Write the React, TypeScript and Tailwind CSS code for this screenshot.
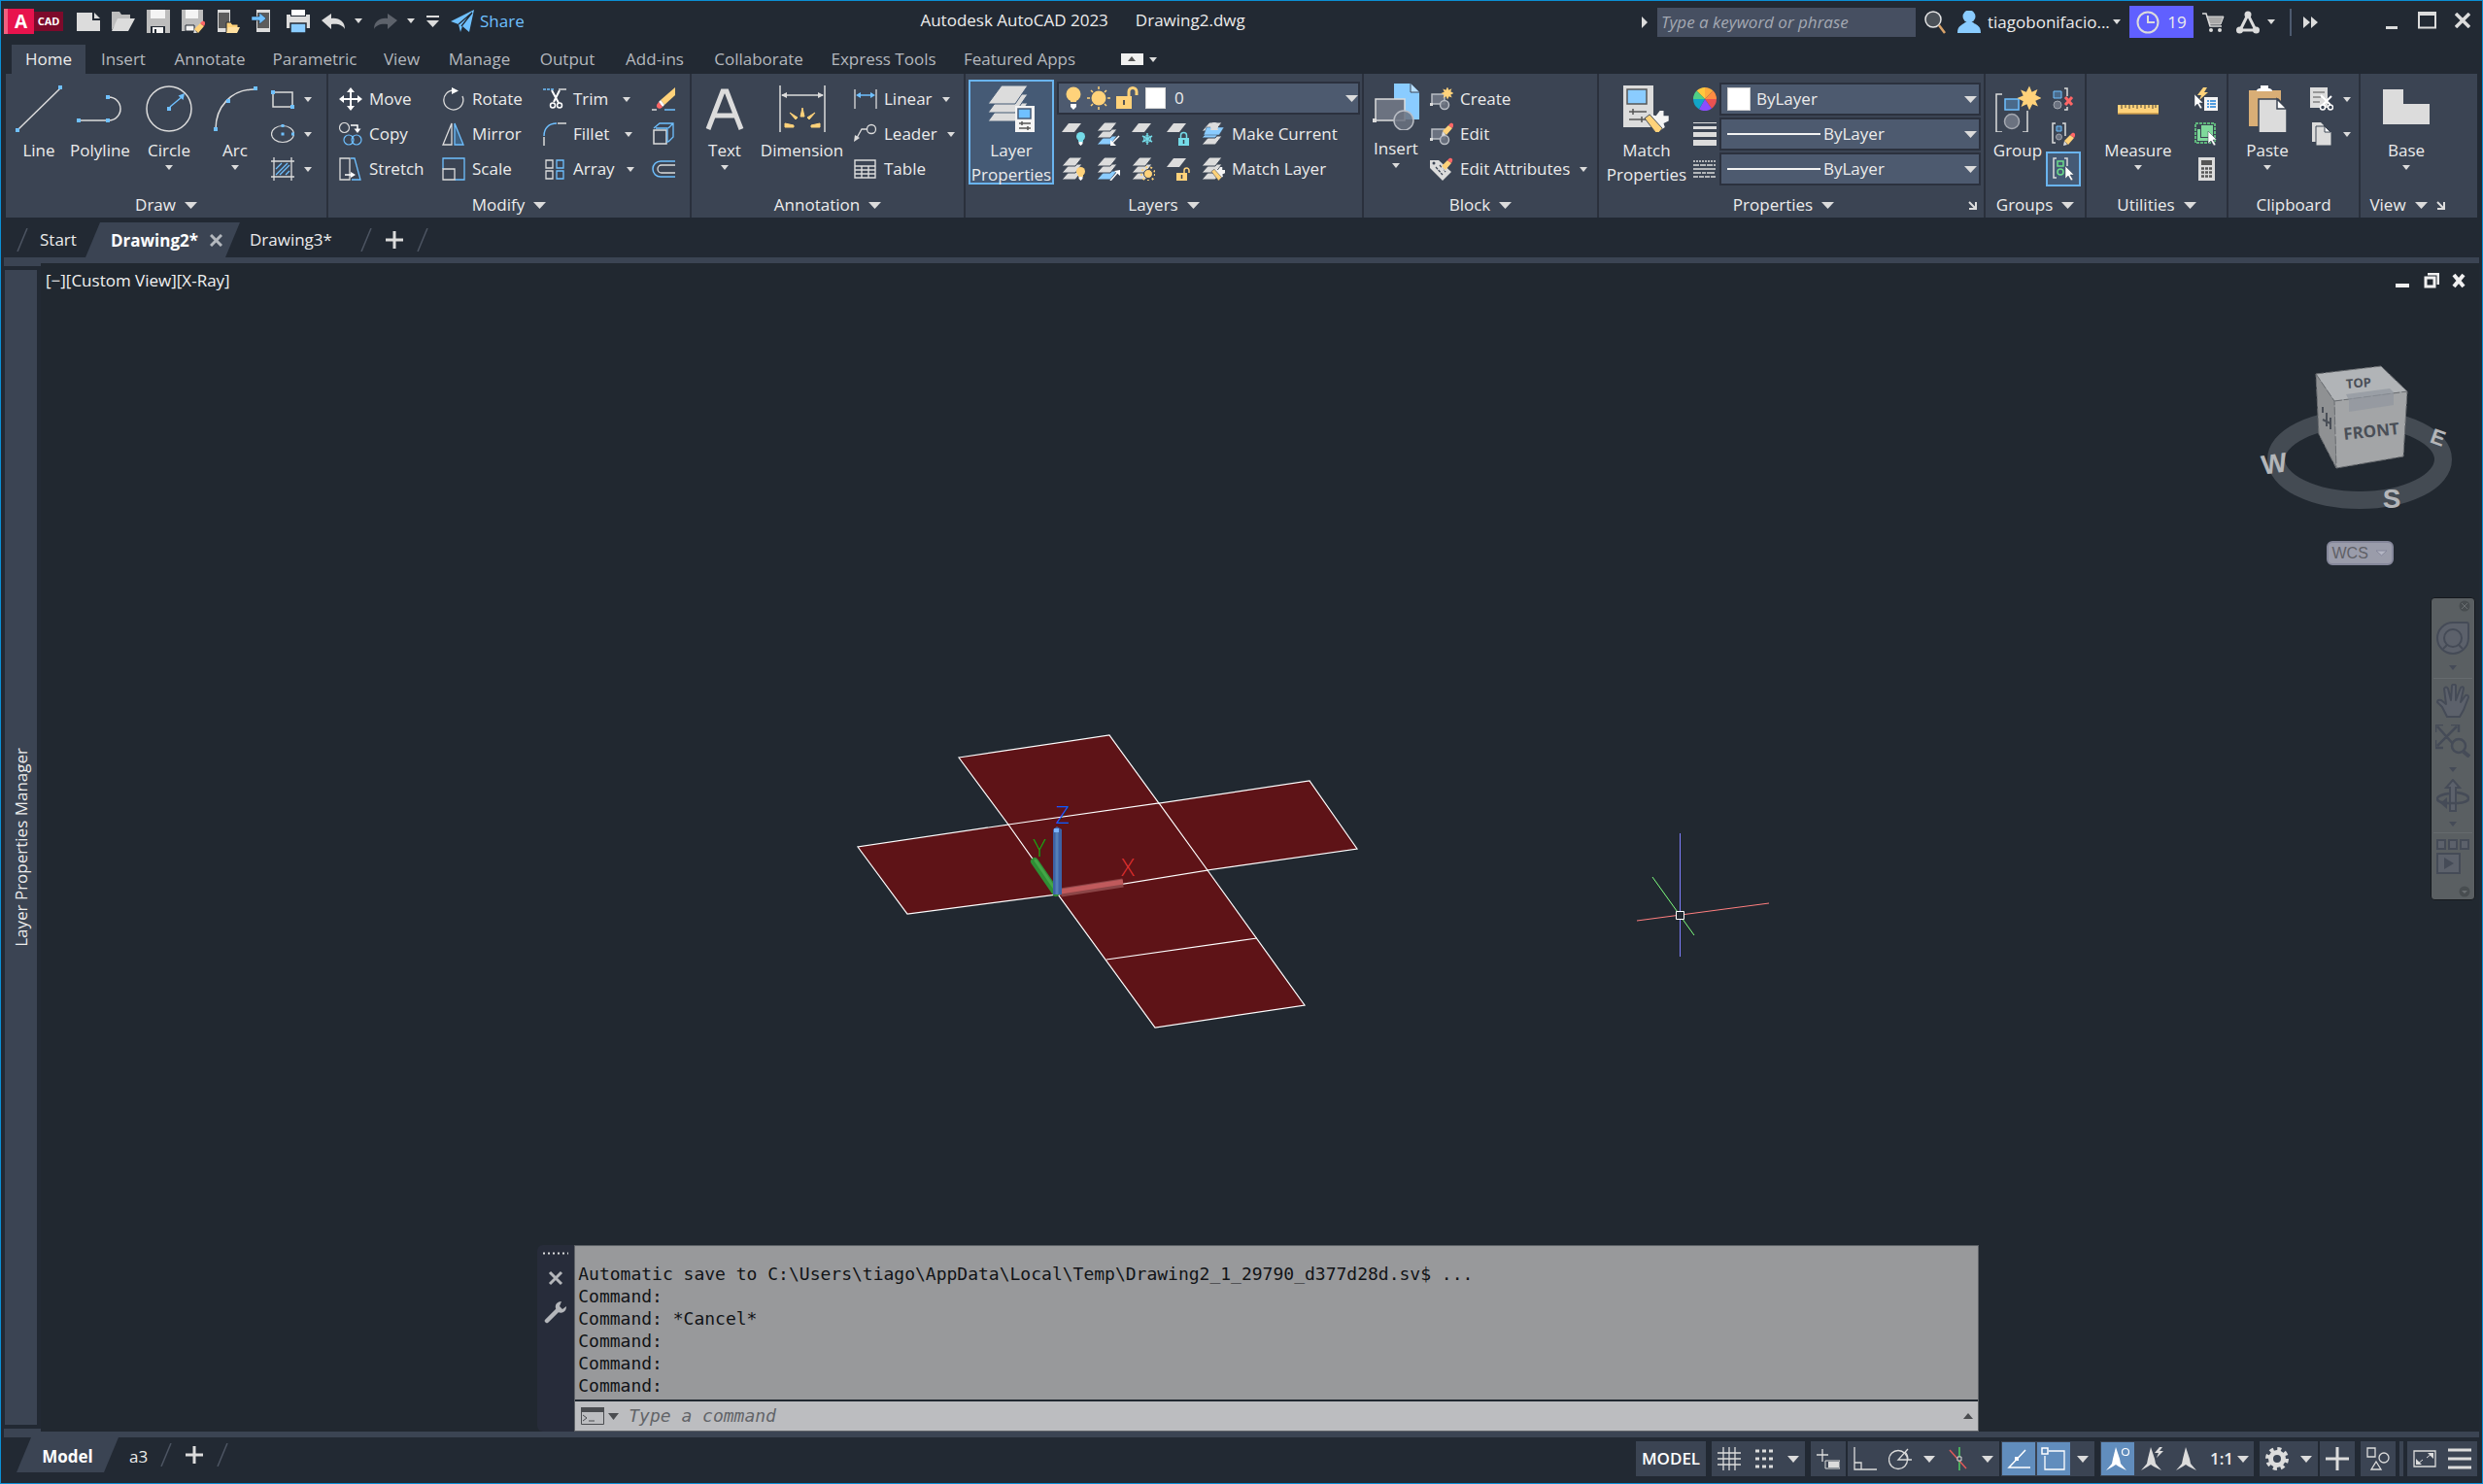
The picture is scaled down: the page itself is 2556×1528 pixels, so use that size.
import type { ReactNode } from 'react';

const W = '#dcdcdc';
const B = '#6fc0ff';
const LB = '#8accff';
const Y = '#ffd27a';
const P = '#3b4453';
const CY = '#74dbe8';
const G = '#6cdc8b';
const R = '#ff6666';

function Ic({ w = 24, h = 24, children }: { w?: number; h?: number; children: ReactNode }) {
  return (
    <svg width={w} height={h} viewBox={`0 0 ${w} ${h}`} fill="none" className="shrink-0" aria-hidden="true">
      {children}
    </svg>
  );
}

function Caret({ big }: { big?: boolean }) {
  return big ? (
    <Ic w={13} h={7}><path d="M0 0h13L6.500 7z" fill={W} /></Ic>
  ) : (
    <Ic w={8} h={5}><path d="M0 0h8L4 5z" fill={W} /></Ic>
  );
}

function Launcher() {
  return (
    <button aria-label="Open dialog" className="flex">
      <Ic w={9} h={9}><path d="M1 1l6 6M8 1v7H1" stroke={W} strokeWidth="2" /></Ic>
    </button>
  );
}

// ---------- shared icon parts ----------

const Sheets = ({ mid = W, low = W }: { mid?: string; low?: string }) => (
  <g stroke={P} strokeWidth="1">
    <path d="M8 14h13l-7 9H0z" fill={low} />
    <path d="M8 7h13l-7 9H0z" fill={mid} />
    <path d="M8 0h13l-7 9H0z" fill={W} />
  </g>
);

const Sheet = () => <path d="M7 1h13l-7 9H0z" fill={W} />;

const Bulb = ({ x, y, c }: { x: number; y: number; c: string }) => (
  <g transform={`translate(${x} ${y})`}>
    <circle cx="4.500" cy="4.500" r="4.500" fill={c} />
    <path d="M2 7h5v3H2z" fill={c} />
    <path d="M2.500 10h4v2l-2 2-2-2z" fill="#fff" />
  </g>
);

const Padlock = ({ x, y, c, open }: { x: number; y: number; c: string; open?: boolean }) => (
  <g transform={`translate(${x} ${y})`}>
    <path d={open ? 'M8 6V3.500a2.500 2.500 0 015 0V6' : 'M2.500 6V3.500a3 3 0 016 0V6'} stroke={c} strokeWidth="1.500" />
    <path d="M0 6h11v8H0z" fill={c} />
    <path d="M5.500 8v4" stroke={P} strokeWidth="1.500" />
  </g>
);

const Pencil = ({ x, y }: { x: number; y: number }) => (
  <g transform={`translate(${x} ${y})`}>
    <path d="M0 14l1-5 3 4z" fill={W} />
    <path d="M1 9l6-6 4 3-6 7z" fill={Y} />
    <path d="M7 3l2-2c2-1 4 1 3 3l-1 2z" fill={R} />
  </g>
);

const Cursor = ({ x, y }: { x: number; y: number }) => (
  <path transform={`translate(${x} ${y})`} d="M0 0v13l3-3 3 5 2-1-3-5h4z" fill="#fff" stroke={P} strokeWidth=".5" />
);

const Block = () => (
  <g stroke="#b9bdc4" strokeWidth="1.500">
    <path d="M2 7h13v10H2z" fill="#6b7280" />
    <circle cx="15" cy="18" r="4.500" fill="#6b7280" fillOpacity=".9" />
    <path d="M0 16h3v3H0z" fill={W} stroke="none" />
  </g>
);

const Burst = ({ cx, cy, s }: { cx: number; cy: number; s: number }) => (
  <path
    transform={`translate(${cx} ${cy}) scale(${s})`}
    d="M0-12l2.500 6L8-8.500 6-3l6 3-6 2.500L8.500 8 3 6 0 12l-2.500-6L-8 8.500-6 3l-6-3 6-2.500L-8.500-8-3-6z"
    fill={Y}
  />
);

const Scissors = () => (
  <g stroke="#fff" strokeWidth="2">
    <path d="M9 3l7 13M17 3l-6 12" />
    <circle cx="10" cy="18.500" r="2.500" strokeWidth="1.500" />
    <circle cx="17" cy="18.500" r="2.500" strokeWidth="1.500" />
  </g>
);

const Brush = ({ x, y, s = 1 }: { x: number; y: number; s?: number }) => (
  <g transform={`translate(${x} ${y}) scale(${s})`}>
    <path d="M5 3l4 1 3-4 3 0 0 4 4 0 0 4-4 2 1 3-4 3z" fill="#f4f4f4" />
    <path d="M0 6l4-3 10 11-4 5z" fill={Y} stroke={P} strokeWidth=".7" />
  </g>
);

// ---------- big ribbon icons (48 x 48) ----------

const bigIcons: Record<string, ReactNode> = {
  line: (
    <Ic w={48} h={48}>
      <path d="M2 46L46 3" stroke={W} strokeWidth="1.500" />
      <path d="M0 44h4v4H0zM44 0h4v4h-4z" fill={B} />
    </Ic>
  ),
  polyline: (
    <Ic w={48} h={48}>
      <path d="M2 36h31a12 12 0 000-24h-2" stroke={W} strokeWidth="1.500" />
      <path d="M0 34h4v4H0zM30 34h4v4h-4zM30 10h4v4h-4z" fill={B} />
    </Ic>
  ),
  circle: (
    <Ic w={48} h={48}>
      <circle cx="24" cy="24" r="23" stroke={W} strokeWidth="1.500" />
      <path d="M22 22h4v4h-4zM40 8l-1.500 7-5-4.500z" fill={B} />
      <path d="M25 22L37 12" stroke={B} strokeWidth="1.500" />
    </Ic>
  ),
  arc: (
    <Ic w={48} h={48}>
      <path d="M4 45C4 22 20 4 44 4" stroke={W} strokeWidth="1.500" />
      <path d="M2 43h4v4H2zM15 14h4v4h-4zM43 1h4v4h-4z" fill={B} />
    </Ic>
  ),
  text: (
    <Ic w={48} h={48}>
      <path d="M7 45L22 6h4l15 39M12 31h24" stroke={W} strokeWidth="5" />
    </Ic>
  ),
  dimension: (
    <Ic w={48} h={48}>
      <path d="M1 0v48M47 0v48M3 10h42" stroke={W} strokeWidth="1.500" />
      <path d="M2 10l6-3v6zM46 10l-6-3v6z" fill={W} />
      <path d="M22 32l2-9 2 9zM17 35l-6-7 8 5zM31 35l6-7-8 5zM15 41l-9-2v4h9zM33 41l9-2v4h-9z" fill={Y} stroke={Y} />
    </Ic>
  ),
  layer: (
    <Ic w={48} h={48}>
      <g stroke="#455a75">
        <path d="M14 18h27L28 37H0z" fill={W} />
        <path d="M14 9h27L28 28H0z" fill={W} />
        <path d="M14 0h27L28 19H0z" fill={W} />
      </g>
      <path d="M28 21h20v27H28z" fill="#f4f4f4" />
      <path d="M31 24h13v10H31z" fill={B} stroke="#455a75" strokeWidth="1.500" />
      <path d="M32 39h12M32 44h12M35 37v4M41 42v4" stroke="#555" strokeWidth="1.500" />
    </Ic>
  ),
  insert: (
    <Ic w={48} h={48}>
      <path d="M22 0h17l9 9v28H22z" fill={LB} />
      <path d="M39 0v9h9" fill="#b9e0ff" stroke={P} />
      <path d="M3 16h30v22H3z" fill="#6b7280" stroke={W} strokeWidth="1.500" />
      <circle cx="32" cy="38" r="10" fill="#6b7280" fillOpacity=".85" stroke="#b9bdc4" strokeWidth="1.500" />
      <path d="M0 36h4v4H0z" fill={W} />
    </Ic>
  ),
  match: (
    <Ic w={48} h={48}>
      <path d="M0 0h31v43H0z" fill={W} />
      <path d="M4 4h20v15H4z" fill={LB} stroke="#555" strokeWidth="1.500" />
      <path d="M6 27h18M6 35h18M10 24v6M19 32v6" stroke="#555" strokeWidth="1.500" />
      <Brush x={22} y={26} s={1.3} />
    </Ic>
  ),
  group: (
    <Ic w={48} h={48}>
      <path d="M8 9H2v39h6M29 48h5V26" stroke={W} strokeWidth="1.500" />
      <path d="M11 14h14v11H11z" fill="#4a6a8a" stroke={B} strokeWidth="1.500" />
      <circle cx="18" cy="37" r="7.500" fill="#6b7280" stroke="#a4a8b0" strokeWidth="1.500" />
      <Burst cx={36} cy={13} s={1.050} />
    </Ic>
  ),
  measure: (
    <Ic w={48} h={48}>
      <path d="M3 20h42v9H3z" fill={Y} />
      <path d="M3 29h42" stroke="#c99a4b" strokeWidth="1.500" />
      <path d="M7 20v4M11 20v3M15 20v4M19 20v3M23 20v4M27 20v3M31 20v4M35 20v3M39 20v4M42 20v3" stroke="#4a4436" />
    </Ic>
  ),
  paste: (
    <Ic w={48} h={48}>
      <path d="M5 5h33v37H5z" fill="#d9ae76" />
      <path d="M13 6c0-3 3-3 4-3V0h8v3c1 0 4 0 4 3z" fill="#fff" />
      <path d="M15 14h20l9 9v26H15z" fill={W} stroke={P} strokeWidth="1.500" />
      <path d="M34 14v10h10z" fill="#fff" stroke={P} strokeWidth="1.500" />
    </Ic>
  ),
  base: (
    <Ic w={48} h={48}><path d="M0 4h21v15h27v21H0z" fill={W} /></Ic>
  ),
};

// ---------- small ribbon icons (24 x 24) ----------

const icons: Record<string, ReactNode> = {
  rect: (
    <Ic>
      <path d="M2 5h20v15H2z" stroke={W} strokeWidth="1.500" />
      <path d="M0 3h4v4H0zM20 18h4v4h-4z" fill={B} />
    </Ic>
  ),
  ellipse: (
    <Ic>
      <ellipse cx="12" cy="12" rx="11.500" ry="8.500" stroke={W} strokeWidth="1.200" />
      <path d="M10.500 2h3v3h-3zM10.500 10.500h3v3h-3zM21 10.500h3v3h-3z" fill={B} />
    </Ic>
  ),
  hatch: (
    <Ic>
      <path d="M0 4h24M0 20h24M3 0v24M21 0v24" stroke={W} strokeWidth="1.300" />
      <path d="M5 12l6-6M5 18L17 6M9 18l10-10M15 18l4-4" stroke={B} strokeWidth="1.300" />
    </Ic>
  ),
  move: (
    <Ic>
      <path d="M12 3v18M3 12h18" stroke="#fff" strokeWidth="2" />
      <path d="M12 0l4 5H8zM12 24l4-5H8zM0 12l5-4v8zM24 12l-5-4v8z" fill="#fff" />
    </Ic>
  ),
  copy: (
    <Ic>
      <circle cx="5.500" cy="5.500" r="5" stroke={W} strokeWidth="1.200" />
      <path d="M12 3h7v5" stroke="#fff" strokeWidth="1.500" />
      <path d="M15.500 6.500h7L19 11z" fill="#fff" />
      <circle cx="10" cy="18" r="5" stroke={B} strokeWidth="1.200" />
      <circle cx="18" cy="18" r="5" stroke={B} strokeWidth="1.200" />
    </Ic>
  ),
  stretch: (
    <Ic>
      <path d="M1 1h10v22H1z" stroke={W} strokeWidth="1.300" />
      <path d="M12 1h4l6 22H13" stroke={B} strokeWidth="1.300" />
      <path d="M6 18h8" stroke="#fff" strokeWidth="1.500" />
      <path d="M12 15l5 3-5 3z" fill="#fff" />
    </Ic>
  ),
  rotate: (
    <Ic>
      <path d="M12 3a10 10 0 109 6" stroke={W} strokeWidth="1.300" />
      <path d="M10 0l7 3.500-7 3.500z" fill="#fff" />
    </Ic>
  ),
  mirror: (
    <Ic>
      <path d="M10 1v22H1z" stroke={W} strokeWidth="1.300" />
      <path d="M13 1v22h9z" fill="#3f6384" stroke={B} strokeWidth="1.300" />
    </Ic>
  ),
  scale: (
    <Ic>
      <path d="M1 12V1h22v22H13" stroke={B} strokeWidth="1.300" />
      <path d="M1 12h12v11H1z" stroke={W} strokeWidth="1.300" />
    </Ic>
  ),
  trim: (
    <Ic>
      <path d="M0 2h11" stroke={B} strokeWidth="1.500" strokeDasharray="3 1" />
      <path d="M16 2h8" stroke={W} strokeWidth="1.500" />
      <Scissors />
    </Ic>
  ),
  fillet: (
    <Ic>
      <path d="M1 15v9M15 1h9" stroke={W} strokeWidth="1.500" />
      <path d="M1 14C1 6 6 1 14 1" stroke={B} strokeWidth="1.500" />
    </Ic>
  ),
  array: (
    <Ic>
      <path d="M3 3h7v8H3zM3 14h7v8H3z" stroke={W} strokeWidth="1.300" />
      <path d="M14 3h7v8h-7zM14 14h7v8h-7z" stroke={B} strokeWidth="1.300" />
    </Ic>
  ),
  erase: (
    <Ic>
      <path d="M0 23h5" stroke={W} strokeWidth="1.500" />
      <path d="M13 23h11" stroke={B} strokeWidth="1.500" />
      <path d="M9 13L24 0v8L13 18z" fill={Y} />
      <path d="M7 15l2-2 4 5-2 2z" fill="#fff" />
      <path d="M7 15l4 5c-2 3-7 2-6-2z" fill={R} />
    </Ic>
  ),
  box3d: (
    <Ic>
      <path d="M2 8h13v14H2z" stroke={W} strokeWidth="1.500" />
      <path d="M2 6l6-5h14v14l-5 5M17 6l5-5M4 6h12v15" stroke={B} strokeWidth="1.300" />
    </Ic>
  ),
  offset: (
    <Ic>
      <path d="M24 4H9a8 8 0 000 16h15" stroke={B} strokeWidth="1.500" />
      <path d="M24 8H10a4 4 0 000 8h14" stroke={W} strokeWidth="1.300" />
    </Ic>
  ),
  linear: (
    <Ic>
      <path d="M1 2v20M23 2v20" stroke={W} strokeWidth="1.300" />
      <path d="M4 8h16" stroke={B} strokeWidth="1.500" />
      <path d="M2 8l5-3v6zM22 8l-5-3v6z" fill={B} />
    </Ic>
  ),
  leader: (
    <Ic>
      <circle cx="18" cy="7" r="4.500" stroke={W} strokeWidth="1.300" />
      <path d="M13 7H8L3 16" stroke={W} strokeWidth="1.300" />
      <path d="M0 20l1-7 5 3z" fill={W} />
    </Ic>
  ),
  table: (
    <Ic>
      <path d="M1 3h21v18H1zM1 9h21M1 13h21M1 17h21M8 9v12M15 9v12" stroke={W} strokeWidth="1.400" />
    </Ic>
  ),
  layOff: <Ic><Sheet /><Bulb x={15} y={10} c={CY} /></Ic>,
  layIso: (
    <Ic>
      <Sheets low={LB} />
      <path d="M23 14l-7 7" stroke="#fff" strokeWidth="1.500" />
      <path d="M14 24v-6l6 6z" fill="#fff" />
    </Ic>
  ),
  layFreeze: (
    <Ic>
      <Sheet />
      <path d="M16 11v12M11 14l10 6M11 20l10-6" stroke={CY} strokeWidth="1.500" />
      <circle cx="16" cy="17" r="3.500" stroke={CY} />
    </Ic>
  ),
  layLock: <Ic><Sheet /><Padlock x={12} y={10} c={CY} /></Ic>,
  makeCurrent: (
    <Ic>
      <Sheets mid={LB} />
      <path d="M5 5h18l-5 8H2z" fill={LB} stroke={P} strokeWidth=".5" />
      <path d="M9 8c0-3 8-3 8 0z" fill={W} />
      <circle cx="13" cy="4" r="4" fill={W} />
    </Ic>
  ),
  layOn: <Ic><Sheets /><Bulb x={15} y={10} c={Y} /></Ic>,
  layUniso: (
    <Ic>
      <Sheets low={LB} />
      <path d="M14 24l7-8" stroke="#fff" strokeWidth="1.500" />
      <path d="M24 13v6l-6-5z" fill="#fff" />
    </Ic>
  ),
  layThaw: (
    <Ic>
      <Sheets />
      <circle cx="17" cy="17" r="7" stroke={Y} strokeWidth="2" strokeDasharray="2 3" />
      <circle cx="17" cy="17" r="4.500" fill={Y} stroke={P} />
    </Ic>
  ),
  layUnlock: <Ic><Sheet /><Padlock x={10} y={10} c={Y} open /></Ic>,
  matchLayer: <Ic><Sheets /><Brush x={10} y={10} s={0.75} /></Ic>,
  create: <Ic><Block /><Burst cx={18} cy={6} s={0.55} /></Ic>,
  edit: <Ic><Block /><Pencil x={12} y={0} /></Ic>,
  attributes: (
    <Ic>
      <path d="M0 3h9l13 12-9 9L0 11z" fill={W} />
      <circle cx="4" cy="6" r="1.500" fill={P} />
      <path d="M6 10l7 8M10 8l6 7" stroke={P} strokeWidth="1.200" strokeDasharray="3 1" />
      <Pencil x={11} y={0} />
    </Ic>
  ),
  colorWheel: (
    <Ic>
      <g stroke="none">
        <path d="M12 12V0a12 12 0 018.500 3.500z" fill="#ffab3d" />
        <path d="M12 12V0a12 12 0 00-8.500 3.500z" fill="#ffc83d" />
        <path d="M12 12l8.500-8.500A12 12 0 0124 12z" fill="#ff8c42" />
        <path d="M12 12h12a12 12 0 01-5 9.700z" fill="#ea5252" />
        <path d="M12 12l7 9.700a12 12 0 01-13 0.700z" fill="#8b4dff" />
        <path d="M12 12L6 22.400A12 12 0 010 12z" fill="#12a5c9" />
        <path d="M12 12H0a12 12 0 013.500-8.500z" fill="#4fcf86" />
      </g>
    </Ic>
  ),
  weights: (
    <Ic><path d="M0 0h24v1H0zM0 4h24v3H0zM0 10h24v5H0zM0 18h24v6H0z" fill={W} /></Ic>
  ),
  linetypes: (
    <Ic>
      <path d="M0 4h23" stroke={W} strokeWidth="1.500" strokeDasharray="2 1" />
      <path d="M0 8h23" stroke={W} strokeWidth="1.500" strokeDasharray="6 1" />
      <path d="M0 12h23" stroke={W} strokeWidth="1.500" />
      <path d="M0 16h23" stroke={W} strokeWidth="1.500" strokeDasharray="8 1 4 1" />
      <path d="M0 20h23" stroke={W} strokeWidth="1.500" strokeDasharray="5 1" />
    </Ic>
  ),
  ungroup: (
    <Ic>
      <path d="M13 1h3v8M16 20v3h-3" stroke={W} strokeWidth="1.500" />
      <path d="M2 4h8v7H2z" fill="#4a6a8a" stroke={B} />
      <circle cx="6" cy="18" r="4" fill="#6b7280" stroke="#a4a8b0" />
      <path d="M14 10l7 8M21 10l-7 8" stroke={R} strokeWidth="3" />
    </Ic>
  ),
  groupEdit: (
    <Ic>
      <path d="M4 1H1v20h3M11 1h3v13" stroke={W} strokeWidth="1.500" />
      <path d="M5 4h5v5H5z" fill="#4a6a8a" stroke={B} />
      <circle cx="7.500" cy="15" r="3" fill="#6b7280" stroke="#a4a8b0" />
      <Pencil x={12} y={10} />
    </Ic>
  ),
  groupSel: (
    <Ic>
      <path d="M5 1H2v20h3M13 1h3v8" stroke={W} strokeWidth="1.500" />
      <path d="M6 4h6v5H6z" stroke={G} strokeWidth="1.500" />
      <circle cx="9" cy="15" r="3" stroke={G} strokeWidth="1.500" />
      <Cursor x={14} y={9} />
    </Ic>
  ),
  quickSelect: (
    <Ic>
      <path d="M9 0L3 8h4l-2 5 9-8h-4l3-5z" fill={Y} />
      <path d="M10 10h14v14H10z" fill="#f4f4f4" />
      <path d="M13 14h2M13 17h2M13 20h2M16 14h6M16 17h6M16 20h6" stroke="#1d7fd6" strokeWidth="1.300" />
      <Cursor x={0} y={7} />
    </Ic>
  ),
  selectAll: (
    <Ic>
      <path d="M1 1h20v20H1z" stroke={G} strokeWidth="1.500" strokeDasharray="3 1" />
      <path d="M7 3h12v12H7z" fill="#7fd99b" />
      <path d="M3 7h3v9h10v3H3z" fill="#7fd99b" />
      <Cursor x={14} y={9} />
    </Ic>
  ),
  calc: (
    <Ic>
      <path d="M4 0h17v24H4z" fill={W} />
      <path d="M7 3h11v5H7z" fill="#555" />
      <path d="M7 11.500h11M7 15.500h11M7 19.500h11" stroke="#555" strokeWidth="2.500" strokeDasharray="3 1" />
    </Ic>
  ),
  cut: (
    <Ic>
      <path d="M0 0h18v21H0z" fill={W} />
      <path d="M3 5h12M3 10h8M3 15h7" stroke="#555" strokeWidth="1.200" />
      <path d="M11 8l10 10M22 9L12 19" stroke="#fff" strokeWidth="2" />
      <circle cx="13" cy="20.500" r="2.500" stroke="#fff" strokeWidth="1.500" fill={P} />
      <circle cx="21" cy="20.500" r="2.500" stroke="#fff" strokeWidth="1.500" fill={P} />
    </Ic>
  ),
  copyClip: (
    <Ic>
      <path d="M2 0h9l3 3v17H2z" fill={W} />
      <path d="M6 4h10l6 6v14H6z" fill={W} stroke={P} />
      <path d="M15 4v6h6z" fill="#fff" stroke={P} />
    </Ic>
  ),
};

// ---------- ribbon building blocks ----------

interface BigProps {
  icon: string;
  label: string;
  width: string;
  caret?: boolean;
  extra?: string;
}

function Big({ icon, label, width, caret, extra = '' }: BigProps) {
  return (
    <button className={`flex flex-col items-center pt-1 ${width} ${extra}`}>
      {bigIcons[icon]}
      <span className="mt-[6px] text-center leading-[25px]">{label}</span>
      {caret && <span className="mt-[3px] flex"><Caret /></span>}
    </button>
  );
}

interface ToolProps {
  icon: string;
  label?: string;
  name?: string;
  caret?: boolean;
  grow?: boolean;
  extra?: string;
}

function Tool({ icon, label, name, caret, grow, extra = '' }: ToolProps) {
  return (
    <button aria-label={label ? undefined : name} className={`flex h-9 items-center gap-[7px] whitespace-nowrap ${extra}`}>
      {icons[icon]}
      {label && <span className={grow ? 'flex-1 text-left' : ''}>{label}</span>}
      {caret && <span className="ml-[3px]"><Caret /></span>}
    </button>
  );
}

interface PanelProps {
  title: string;
  width: string;
  caret?: boolean;
  launcher?: string;
  children: ReactNode;
}

function Panel({ title, width, caret = true, launcher, children }: PanelProps) {
  return (
    <section className={`flex flex-col border-r-2 border-[#2a303c] bg-[#3b4453] last:border-r-0 ${width}`}>
      <div className="flex flex-1 pt-2">{children}</div>
      <div className="flex h-[26px] items-center">
        <button className="flex flex-1 items-center justify-center gap-[9px]">
          {title}
          {caret && <Caret big />}
        </button>
        {launcher && <span className={launcher}><Launcher /></span>}
      </div>
    </section>
  );
}

function LineSelect({ label, swatch }: { label: string; swatch?: boolean }) {
  return (
    <label className="flex h-[34px] items-center border-2 border-[#2b313e] bg-[#4d5a6f] pl-[6px]">
      {swatch ? (
        <span className="size-6 border border-[#cfcfcf] bg-white" />
      ) : (
        <span className="h-[2px] w-24 bg-[#f2f2f2]" />
      )}
      <select aria-label={label} className={`min-w-0 flex-1 appearance-none bg-transparent outline-none ${swatch ? 'pl-[6px]' : 'pl-[3px]'}`}>
        <option>ByLayer</option>
      </select>
      <span className="mr-[2px]"><Caret big /></span>
    </label>
  );
}

// ---------- title bar ----------

function TitleBar() {
  return (
    <header className="flex h-[45px] items-center pr-3 pl-[3px]">
      <div className="flex w-[37%] items-center pb-1">
        <div className="flex items-center font-bold text-white">
          <span className="flex h-[26px] w-[31px] items-center justify-center border-l-4 border-[#f0607f] bg-[#e8134d] text-[19px]">A</span>
          <span className="flex h-5 w-[30px] items-center justify-center bg-[#7d0a2b] text-[11px]">CAD</span>
        </div>
        <div className="ml-[14px] flex items-center gap-3">
          <button aria-label="New">
            <Ic><path d="M0 3h16v8h8v11H0z" fill={W} /><path d="M18 3l6 6h-6z" fill={W} /></Ic>
          </button>
          <button aria-label="Open">
            <Ic><path d="M0 2h8l2 3h9v4H8L0 21z" fill="#bdbdbd" /><path d="M6 9h18l-7 13H0z" fill={W} /></Ic>
          </button>
          <button aria-label="Save">
            <Ic><path d="M0 0h24v24H0z" fill="#bdbdbd" /><path d="M4 0h15v9H4z" fill="#f4f4f4" /><path d="M4 17h15v7H4z" fill="#222933" /><path d="M6 18h11v6H6z" fill="#f4f4f4" /><path d="M8 20h2v4H8z" fill="#222933" /></Ic>
          </button>
          <button aria-label="Save As">
            <Ic><path d="M0 0h22v12l-8 10H0z" fill="#bdbdbd" /><path d="M4 0h13v9H4z" fill="#f4f4f4" /><path d="M4 16h9v6H4z" fill="#f4f4f4" stroke="#222933" /><Pencil x={12} y={11} /></Ic>
          </button>
          <button aria-label="Open from Web">
            <Ic><path d="M1 0h13v23H1z" fill={W} /><path d="M2 3h11v16H2z" fill="#5c5c5c" /><path d="M10 13h5l1 2h6v8H10z" fill={Y} stroke="#222933" /><path d="M12 18h12l-3 6H10z" fill="#ffe0a0" /></Ic>
          </button>
          <button aria-label="Save to Web">
            <Ic><path d="M5 0h14v23H5z" fill={W} /><path d="M6 3h12v16H6z" fill="#5c5c5c" /><path d="M0 7h8V3l7 6-7 6v-4H0z" fill={B} stroke="#222933" strokeWidth=".5" /></Ic>
          </button>
          <button aria-label="Plot">
            <Ic><path d="M5 0h14v6H5z" fill="#fff" /><path d="M0 7h24v12H0z" fill={W} /><path d="M0 5h4v2H0zM20 5h4v2h-4z" fill={W} /><path d="M4 14h16v10H4z" fill={LB} stroke="#222933" strokeWidth="1.500" /></Ic>
          </button>
          <button aria-label="Undo">
            <Ic><path d="M0 11L10 4v5c8-1 14 3 14 11-2-4-7-6-14-5v5z" fill={W} /></Ic>
          </button>
          <button aria-label="Undo history" className="-ml-[2px]"><Caret /></button>
          <button aria-label="Redo">
            <Ic><path d="M24 11L14 4v5C6 8 0 12 0 20c2-4 7-6 14-5v5z" fill="#5d626b" /></Ic>
          </button>
          <button aria-label="Redo history" className="-ml-[2px]"><Caret /></button>
          <button aria-label="Customize toolbar">
            <Ic w={13} h={13}><path d="M0 1h13v2H0zM0 6h13l-6.500 7z" fill={W} /></Ic>
          </button>
          <button className="flex items-center gap-[6px] text-[#6fc0ff]">
            <Ic><path d="M0 12L24 0l-5 23-7-6-2 6-2-8z" fill={B} /><path d="M8 15L22 3 11 17" stroke="#222933" strokeWidth="1.300" /></Ic>
            Share
          </button>
        </div>
      </div>
      <h1 className="flex gap-7 pb-[6px] pl-1">
        <span>Autodesk AutoCAD 2023</span>
        <span>Drawing2.dwg</span>
      </h1>
      <div className="flex flex-1 items-center justify-end pb-[2px]">
        <button aria-label="Collapse search" className="mr-[10px]"><Ic w={6} h={12}><path d="M0 0l6 6-6 6z" fill={W} /></Ic></button>
        <input aria-label="Search" placeholder="Type a keyword or phrase" className="h-[30px] w-[266px] bg-[#464f61] px-1 italic outline-none placeholder:text-[#a4a9b3]" />
        <button aria-label="Find" className="ml-2">
          <Ic><circle cx="10" cy="9" r="8" fill="#4b5158" stroke="#e6e6e6" strokeWidth="1.500" /><path d="M16 15l6 8" stroke="#d9a36a" strokeWidth="2.500" /></Ic>
        </button>
        <button className="ml-[11px] flex items-center">
          <Ic><circle cx="12" cy="6" r="6.500" fill={LB} /><path d="M0 23c0-8 5-8 8-11h8c3 3 8 3 8 11z" fill={LB} /></Ic>
          <span className="ml-[7px] w-[129px] truncate text-left">tiagobonifacio...</span>
          <Caret />
        </button>
        <button className="ml-[9px] flex h-[33px] w-[66px] items-center justify-center gap-2 bg-[#6060ff]">
          <Ic><circle cx="12" cy="12" r="10.500" stroke={W} strokeWidth="2" /><path d="M12 5v7h7" stroke={W} strokeWidth="2" /></Ic>
          19
        </button>
        <button aria-label="App store" className="ml-[9px]">
          <Ic><path d="M0 3h4l4 13h12" stroke={W} strokeWidth="1.500" /><path d="M5 6h17l-3 8H8z" fill="#a9a9a9" stroke={W} /><circle cx="9" cy="20" r="2" fill={W} /><circle cx="18" cy="20" r="2" fill={W} /></Ic>
        </button>
        <button aria-label="Autodesk account" className="ml-[11px] flex items-center gap-2">
          <Ic><path d="M12 4L4 20h16z" stroke={W} strokeWidth="3" /><circle cx="12" cy="4" r="3.500" fill={W} /><circle cx="3.500" cy="20" r="3.500" fill={W} /><circle cx="20.500" cy="20" r="3.500" fill={W} /></Ic>
          <Caret />
        </button>
        <span className="ml-[15px] h-7 w-[2px] bg-[#4d5a6f]" />
        <button aria-label="More" className="ml-3"><Ic w={15} h={12}><path d="M0 0l7 6-7 6zM8 0l7 6-7 6z" fill={W} /></Ic></button>
        <div className="ml-[70px] flex items-center gap-[19px] pb-1">
          <button aria-label="Minimize"><Ic w={14} h={18}><path d="M0 15h12v3H0z" fill={W} /></Ic></button>
          <button aria-label="Restore"><Ic w={19} h={18}><path d="M1 1.500h17v15H1z" stroke={W} strokeWidth="2" /><path d="M0 0h19v4H0z" fill={W} /></Ic></button>
          <button aria-label="Close"><Ic w={16} h={16}><path d="M1 1l14 14M15 1L1 15" stroke={W} strokeWidth="3.500" /></Ic></button>
        </div>
      </div>
    </header>
  );
}

const ribbonTabs = [
  { name: 'Insert', width: 'w-[74px]' },
  { name: 'Annotate', width: 'w-[104px]' },
  { name: 'Parametric', width: 'w-[112px]' },
  { name: 'View', width: 'w-[67px]' },
  { name: 'Manage', width: 'w-[93px]' },
  { name: 'Output', width: 'w-[88px]' },
  { name: 'Add-ins', width: 'w-[92px]' },
  { name: 'Collaborate', width: 'w-[122px]' },
  { name: 'Express Tools', width: 'w-[135px]' },
  { name: 'Featured Apps', width: 'w-[145px]' },
];

function RibbonTabs() {
  return (
    <nav className="flex h-[30px] items-center pl-[11px]">
      <button className="h-full w-[76px] bg-[#3b4453]">Home</button>
      <div className="flex pl-[2px]">
        {ribbonTabs.map((tab) => (
          <button key={tab.name} className={`whitespace-nowrap text-[#b4b8be] ${tab.width}`}>{tab.name}</button>
        ))}
      </div>
      <button aria-label="Minimize ribbon" className="ml-8 flex items-center gap-[6px]">
        <Ic w={23} h={12}><path d="M0 0h23v12H0z" fill="#f0f0f0" /><path d="M7 8h8l-4-5z" fill="#555" /></Ic>
        <Caret />
      </button>
    </nav>
  );
}

function Ribbon() {
  return (
    <div className="mx-[5px] flex h-[148px]">
      <Panel title="Draw" width="w-[332px]">
        <Big icon="line" label="Line" width="ml-[5px] w-[58px]" />
        <Big icon="polyline" label="Polyline" width="w-[68px]" />
        <Big icon="circle" label="Circle" width="w-[74px]" caret />
        <Big icon="arc" label="Arc" width="w-[62px]" caret />
        <div className="ml-[6px]">
          <Tool icon="rect" name="Rectangle" caret />
          <Tool icon="ellipse" name="Ellipse" caret />
          <Tool icon="hatch" name="Hatch" caret />
        </div>
      </Panel>
      <Panel title="Modify" width="w-[374px]">
        <div className="ml-[11px] w-[106px]">
          <Tool icon="move" label="Move" />
          <Tool icon="copy" label="Copy" />
          <Tool icon="stretch" label="Stretch" />
        </div>
        <div className="w-[104px]">
          <Tool icon="rotate" label="Rotate" />
          <Tool icon="mirror" label="Mirror" />
          <Tool icon="scale" label="Scale" />
        </div>
        <div className="w-[112px]">
          <Tool icon="trim" label="Trim" caret grow extra="w-[90px]" />
          <Tool icon="fillet" label="Fillet" caret grow extra="w-[92px]" />
          <Tool icon="array" label="Array" caret grow extra="w-[94px]" />
        </div>
        <div>
          <Tool icon="erase" name="Erase" />
          <Tool icon="box3d" name="Explode" />
          <Tool icon="offset" name="Offset" />
        </div>
      </Panel>
      <Panel title="Annotation" width="w-[282px]">
        <Big icon="text" label="Text" width="ml-1 w-[60px]" caret />
        <Big icon="dimension" label="Dimension" width="w-[99px]" />
        <div className="ml-1">
          <Tool icon="linear" label="Linear" caret />
          <Tool icon="leader" label="Leader" caret />
          <Tool icon="table" label="Table" />
        </div>
      </Panel>
      <Panel title="Layers" width="w-[410px]">
        <Big
          icon="layer"
          label="Layer Properties"
          width="w-[88px]"
          extra="-mt-[2px] ml-[3px] h-[108px] border-2 border-[#6ab4ee] bg-[#455a75]"
        />
        <div className="ml-[3px]">
          <label className="mb-[2px] flex h-[34px] w-[312px] items-center gap-[6px] border-2 border-[#2b313e] bg-[#4d5a6f] pl-[7px]">
            <Ic w={16}><circle cx="8" cy="8" r="7.500" fill={Y} /><path d="M5 12h6v4H5z" fill={Y} /><path d="M5 18h6v3l-3 3-3-3z" fill="#fff" /></Ic>
            <Ic>
              <circle cx="12" cy="12" r="7.500" fill={Y} />
              <path d="M12 0v3M12 21v3M0 12h3M21 12h3M4 4l2 2M18 18l2 2M20 4l-2 2M6 18l-2 2" stroke={Y} strokeWidth="1.500" />
            </Ic>
            <Ic><path d="M13 11V5.500a4 4 0 018 0V9" stroke={Y} strokeWidth="3" /><path d="M0 10h16v13H0z" fill={Y} /><path d="M8 14v5" stroke="#555" strokeWidth="2" /></Ic>
            <span className="h-[22px] w-[21px] shrink-0 border border-[#d8d8d8] bg-white" />
            <select aria-label="Current layer" className="min-w-0 flex-1 appearance-none bg-transparent pl-[3px] outline-none">
              <option>0</option>
            </select>
            <span><Caret big /></span>
          </label>
          <div className="flex gap-3 pl-[5px]">
            <Tool icon="layOff" name="Layer off" />
            <Tool icon="layIso" name="Isolate layer" />
            <Tool icon="layFreeze" name="Freeze layer" />
            <Tool icon="layLock" name="Lock layer" />
            <Tool icon="makeCurrent" label="Make Current" />
          </div>
          <div className="flex gap-3 pl-[5px]">
            <Tool icon="layOn" name="Turn all layers on" />
            <Tool icon="layUniso" name="Unisolate layer" />
            <Tool icon="layThaw" name="Thaw all layers" />
            <Tool icon="layUnlock" name="Unlock layer" />
            <Tool icon="matchLayer" label="Match Layer" />
          </div>
        </div>
      </Panel>
      <Panel title="Block" width="w-[242px]">
        <Big icon="insert" label="Insert" width="-mt-[2px] ml-1 w-[58px]" caret />
        <div className="ml-[6px]">
          <Tool icon="create" label="Create" />
          <Tool icon="edit" label="Edit" />
          <Tool icon="attributes" label="Edit Attributes" caret />
        </div>
      </Panel>
      <Panel title="Properties" width="w-[398px]" launcher="mr-[7px]">
        <Big icon="match" label="Match Properties" width="ml-1 w-[90px]" />
        <div className="ml-[3px] w-6">
          <Tool icon="colorWheel" name="Object color" />
          <Tool icon="weights" name="Lineweight" />
          <Tool icon="linetypes" name="Linetype" />
        </div>
        <div className="mr-[3px] ml-[3px] flex flex-1 flex-col gap-[2px] pt-px">
          <LineSelect label="Object color" swatch />
          <LineSelect label="Lineweight" />
          <LineSelect label="Linetype" />
        </div>
      </Panel>
      <Panel title="Groups" width="w-[104px]">
        <Big icon="group" label="Group" width="ml-[6px] w-[54px]" />
        <div className="ml-[2px] flex flex-col items-center">
          <Tool icon="ungroup" name="Ungroup" />
          <Tool icon="groupEdit" name="Group edit" />
          <Tool icon="groupSel" name="Group selection" extra="border-2 border-[#6ab4ee] bg-[#455a75] px-1" />
        </div>
      </Panel>
      <Panel title="Utilities" width="w-[146px]">
        <Big icon="measure" label="Measure" width="ml-[14px] w-[78px]" caret />
        <div className="ml-[19px]">
          <Tool icon="quickSelect" name="Quick select" />
          <Tool icon="selectAll" name="Select all" />
          <Tool icon="calc" name="Quick calculator" />
        </div>
      </Panel>
      <Panel title="Clipboard" width="w-[136px]" caret={false}>
        <Big icon="paste" label="Paste" width="ml-3 w-[56px]" caret />
        <div className="ml-4">
          <Tool icon="cut" name="Cut" caret />
          <Tool icon="copyClip" name="Copy" caret />
        </div>
      </Panel>
      <Panel title="View" width="flex-1" launcher="mr-[33px]">
        <Big icon="base" label="Base" width="ml-[18px] w-[58px]" caret />
      </Panel>
    </div>
  );
}

const Slash = () => (
  <Ic w={12}><path d="M1 24L11 0" stroke="#4d5563" strokeWidth="1.500" /></Ic>
);

const Plus = () => (
  <Ic w={18} h={18}><path d="M9 0v18M0 9h18" stroke={W} strokeWidth="3" /></Ic>
);

function FileTabs() {
  return (
    <nav className="flex h-[41px] items-end pl-4">
      <div className="flex h-9 items-center">
        <Slash />
        <button className="ml-3 w-[47px] text-left">Start</button>
      </div>
      <div className="flex h-9 w-[159px] items-center bg-[#3b4453] pl-[26px] [clip-path:polygon(15px_0,100%_0,calc(100%-15px)_100%,0_100%)]">
        <button className="w-[102px] pt-[2px] text-left font-bold text-white">Drawing2*</button>
        <button aria-label="Close Drawing2"><Ic w={13} h={13}><path d="M1 1l11 11M12 1L1 12" stroke="#b4b8be" strokeWidth="3" /></Ic></button>
      </div>
      <div className="flex h-9 items-center pl-[10px]">
        <button className="w-[114px] text-left">Drawing3*</button>
        <Slash />
        <button aria-label="New drawing" className="mx-[14px]"><Plus /></button>
        <Slash />
      </div>
    </nav>
  );
}

// ---------- viewport ----------

function Model() {
  return (
    <svg className="absolute inset-0 h-full w-full" aria-label="Model space">
      <g transform="translate(-42 -271)">
        <path
          d="M987 780L1142 757 1193 827 1348 804 1397 874 1243 896 1343 1035 1189 1058 1089 921 934 941 883 872 1038 849z"
          fill="#5e1317"
          stroke="#fff"
          strokeWidth="1.200"
        />
        <path d="M1038 849L1193 827 1243 896 1089 921zM1139 988l155-22" stroke="#fff" strokeWidth="1.200" fill="none" />
        <path d="M1065 887l22 32" stroke="#2f8f35" strokeWidth="8" strokeLinecap="round" />
        <path d="M1066 886l21 31" stroke="#45a548" strokeWidth="3" strokeLinecap="round" />
        <path d="M1092 919l64-10" stroke="#8c4547" strokeWidth="9" />
        <path d="M1092 918l64-10" stroke="#c05a5c" strokeWidth="5" />
        <path d="M1084 854l4-3 5 3v67h-9z" fill="#3d62a5" />
        <path d="M1088 856v65" stroke="#5580b8" strokeWidth="3" />
        <path d="M1085 853h5v4h-5z" fill="#7ab4ff" />
        <g fontFamily="Open Sans, sans-serif" fontWeight="300" fontSize="25" textAnchor="middle">
          <text x="1094" y="848" fill="#0a5cff">Z</text>
          <text x="1070" y="882" fill="#12a512">Y</text>
          <text x="1161" y="902" fill="#e03030">X</text>
        </g>
        <path d="M1729.500 858v127" stroke="#7f7fff" />
        <path d="M1701 903l43 60" stroke="#7fff7f" />
        <path d="M1685 948l136-18" stroke="#ff7f7f" />
        <path d="M1725.500 938.500h8v8h-8z" fill="#212830" stroke="#fff" />
      </g>
    </svg>
  );
}

function ViewCube() {
  return (
    <svg width="204" height="152" viewBox="2322 374 204 152" className="overflow-visible" aria-label="View cube">
      <ellipse cx="2429" cy="473" rx="86" ry="42" fill="none" stroke="#444b53" strokeWidth="18" />
      <path d="M2384 385L2403 413 2405 482 2387 447z" fill="#8f9193" />
      <path d="M2384 385L2451 377 2478 403 2403 413z" fill="#b1b4b7" />
      <path d="M2403 413L2478 403 2474 470 2405 482z" fill="#a3a5a7" />
      <path d="M2384 385L2403 413 2405 482M2403 413l75-10M2384 385l67-8 27 26-4 67-69 12-18-35z" fill="none" stroke="#6b6e72" strokeDasharray="8 2" />
      <path d="M2415 406l45-6 4 4v13l-46 7v-12z" fill="#90959e" fillOpacity=".7" />
      <g fontFamily="Open Sans, sans-serif" fontWeight="700" textAnchor="middle" fill="#4a4f57">
        <text x="2428" y="399" fontSize="13" transform="rotate(-4 2428 395)">TOP</text>
        <text x="2441" y="450" fontSize="17" transform="rotate(-6 2441 444)">FRONT</text>
      </g>
      <path d="M2391 419v6M2395 425v14M2391 432l8 4M2399 430v12" stroke="#4a4f57" strokeWidth="2" fill="none" />
      <g fontFamily="Liberation Sans, sans-serif" fontWeight="700" textAnchor="middle" fill="#b4b6b9" fontSize="22">
        <text x="2341" y="487" fontSize="28" transform="rotate(-8 2341 478)">W</text>
        <text x="2510" y="458" transform="rotate(20 2510 450)">E</text>
        <text x="2462" y="523" fontSize="28">S</text>
      </g>
    </svg>
  );
}

function NavBar() {
  const s = '#454b57';
  return (
    <div className="flex h-[312px] w-[46px] flex-col items-center rounded-sm border border-[#14181d] bg-[#5a5f62]">
      <button aria-label="Close navigation bar" className="mr-1 flex self-end pt-[2px]">
        <Ic w={12} h={12}><circle cx="6" cy="6" r="5.500" fill="#484d50" /><path d="M3 3l6 6M9 3L3 9" stroke="#6a6f72" /></Ic>
      </button>
      <button aria-label="Steering wheel" className="mt-[10px] flex">
        <Ic w={34} h={34}>
          <path d="M17 1h14q2 0 2 2v14a16 16 0 11-16-16z" fill="#5c616b" stroke={s} strokeWidth="2" />
          <circle cx="17" cy="17" r="9" stroke={s} strokeWidth="2" />
          <path d="M11 24l-4 4M23 24l4 4" stroke={s} strokeWidth="2" />
        </Ic>
      </button>
      <span className="mt-[11px] flex"><Ic w={8} h={5}><path d="M0 0h8L4 5z" fill={s} /></Ic></span>
      <span className="mt-2 h-px w-10 bg-[#666b6e]" />
      <button aria-label="Pan" className="mt-[5px] flex">
        <Ic w={34} h={36}>
          <path
            d="M11 34L6 24 1 19q0-3 4-2l5 4L8 5q2-3 4 0l3 12 1-15q2-3 4 0l0 15 5-13q3-2 3 1l-3 14 5-7q3-1 3 2l-5 13-4 7z"
            fill="#5c616b"
            stroke={s}
            strokeWidth="2"
            strokeLinejoin="round"
          />
        </Ic>
      </button>
      <button aria-label="Zoom extents" className="mt-[6px] flex">
        <Ic w={36} h={34}>
          <path d="M2 2l18 20M22 2L2 22M0 8V0h8M16 0h8v8M0 16v8h8" stroke={s} strokeWidth="2.500" />
          <circle cx="24" cy="22" r="7" fill="#5a5f62" stroke={s} strokeWidth="2.500" />
          <path d="M29 28l6 5" stroke={s} strokeWidth="4" />
        </Ic>
      </button>
      <span className="mt-[10px] flex"><Ic w={8} h={5}><path d="M0 0h8L4 5z" fill={s} /></Ic></span>
      <button aria-label="Orbit" className="mt-[7px] flex">
        <Ic w={34} h={34}>
          <path d="M14 33V9h-4l7-8 7 8h-4v24z" fill="#5c616b" stroke={s} strokeWidth="2" />
          <path d="M13 15C-3 17-3 24 12 25M21 14c16 2 16 10 1 11h-14" stroke={s} strokeWidth="2.500" />
          <path d="M4 25l7-6v12z" fill={s} />
        </Ic>
      </button>
      <span className="mt-[10px] flex"><Ic w={8} h={5}><path d="M0 0h8L4 5z" fill={s} /></Ic></span>
      <span className="mt-[6px] h-px w-10 bg-[#666b6e]" />
      <button aria-label="Show motion" className="mt-[6px] flex">
        <Ic w={34} h={36}>
          <path d="M1 1h8v9H1zM13 1h8v9h-8zM25 1h8v9h-8zM1 15h23v20H1z" fill="#5c616b" stroke={s} strokeWidth="2" />
          <path d="M8 19l10 6-10 6z" fill={s} />
        </Ic>
      </button>
      <button aria-label="Navigation bar options" className="mt-auto mr-1 flex self-end pb-[2px]">
        <Ic w={12} h={12}><circle cx="6" cy="6" r="5.500" fill="#484d50" /><path d="M3 5h6L6 8z" fill="#6a6f72" /></Ic>
      </button>
    </div>
  );
}

const history = [
  'Automatic save to C:\\Users\\tiago\\AppData\\Local\\Temp\\Drawing2_1_29790_d377d28d.sv$ ...',
  'Command:',
  'Command: *Cancel*',
  'Command:',
  'Command:',
  'Command:',
];

function CommandWindow() {
  return (
    <div className="absolute inset-x-0 bottom-0 flex justify-center pr-1 font-['DejaVu_Sans_Mono','Liberation_Mono',monospace] text-[18px] text-[#111316]">
      <div className="flex w-[59.2%]">
        <div className="flex w-[38px] flex-col items-center rounded-l-md bg-[#272c3a] pt-[7px]">
          <Ic w={28} h={3}><path d="M1 1.500h26" stroke={W} strokeWidth="2" strokeDasharray="2 3" /></Ic>
          <button aria-label="Close command line" className="mt-4">
            <Ic w={16} h={16}><path d="M2 2l12 12M14 2L2 14" stroke="#b4b6ba" strokeWidth="3" /></Ic>
          </button>
          <button aria-label="Customize" className="mt-[15px]">
            <Ic w={24} h={24}>
              <path d="M3 21L14 10" stroke="#b4b6ba" strokeWidth="4.500" strokeLinecap="round" />
              <path d="M18 1c-4 0-7 3-6 7s5 6 8 4c2-1 3-3 3-6l-4 3-3-3z" fill="#b4b6ba" />
            </Ic>
          </button>
        </div>
        <div className="min-w-0 flex-1 border border-[#5f6368] bg-[#98999b]">
          <div className="pt-[17px] pb-[3px] pl-[3px] leading-[23px] whitespace-nowrap">
            {history.map((line, i) => (
              <p key={i}>{line}</p>
            ))}
          </div>
          <div className="flex h-8 items-center border-t-2 border-[#212830] bg-[#bcbdc0] pr-[5px] pl-[6px]">
            <button aria-label="Recent commands" className="flex items-center gap-1">
              <Ic w={24} h={18}>
                <path d="M.5.5h23v17H.5z" stroke="#4a4c50" />
                <path d="M0 0h24v5H0z" fill="#4a4c50" />
                <path d="M2 8l4 3-4 3M8 14h6" stroke="#4a4c50" />
              </Ic>
              <Ic w={11} h={7}><path d="M0 0h11L5.500 7z" fill="#4a4c50" /></Ic>
            </button>
            <input aria-label="Command" placeholder="Type a command" className="ml-[10px] min-w-0 flex-1 bg-transparent italic outline-none placeholder:text-[#626468]" />
            <button aria-label="Expand history"><Ic w={10} h={6}><path d="M0 6h10L5 0z" fill="#4a4c50" /></Ic></button>
          </div>
        </div>
      </div>
    </div>
  );
}

function Viewport() {
  return (
    <main className="relative min-w-0 flex-1 overflow-hidden border-y-[6px] border-[#3b4453] bg-[#212830]">
      <Model />
      <div className="relative flex items-start justify-between pt-[6px] pr-3 pl-[5px]">
        <div className="flex text-[#f2f2f2]">
          <button>[−]</button>
          <button>[Custom View]</button>
          <button>[X-Ray]</button>
        </div>
        <div className="flex gap-3 pt-1">
          <button aria-label="Minimize viewport"><Ic w={17} h={17}><path d="M1 11h14v4H1z" fill="#f0f0f0" /></Ic></button>
          <button aria-label="Restore viewport"><Ic w={17} h={17}><path d="M5 1h11v11M3 5h9v9H3z" stroke="#f0f0f0" strokeWidth="3" /></Ic></button>
          <button aria-label="Close viewport"><Ic w={17} h={17}><path d="M3 2l10 12M13 2L3 14" stroke="#f0f0f0" strokeWidth="4" /></Ic></button>
        </div>
      </div>
      <div className="absolute top-[103px] right-[26px] flex flex-col items-center">
        <ViewCube />
        <button className="mt-[31px] ml-[10px] flex h-[25px] w-[69px] items-center justify-between rounded-md border-2 border-[#85879a] bg-[#9a9caa] px-1 text-[16px] text-[#5f6066] font-['Liberation_Sans',sans-serif]">
          WCS
          <Ic w={13} h={7}><path d="M1 1h11L6.500 6z" fill="#b4b6c4" stroke="#85879a" /></Ic>
        </button>
      </div>
      <div className="absolute top-[344px] right-1">
        <NavBar />
      </div>
      <CommandWindow />
    </main>
  );
}

function Palette() {
  return (
    <aside className="flex w-[38px] flex-col">
      <div className="h-[9px] bg-[#3b4453]" />
      <div className="my-1 ml-px flex w-[33px] flex-1 items-center justify-center bg-[#3b4453]">
        <span className="rotate-180 text-[17px] whitespace-nowrap [writing-mode:vertical-rl]">Layer Properties Manager</span>
      </div>
      <div className="h-[9px] bg-[#3b4453]" />
    </aside>
  );
}

// ---------- status bar ----------

const StatusBtn = ({ name, width, on, children }: { name: string; width: string; on?: boolean; children: ReactNode }) => (
  <button aria-label={name} aria-pressed={on} className={`flex h-full items-center justify-center ${width} ${on ? 'border border-[#3b4453] bg-[#618dbd]' : ''}`}>
    {children}
  </button>
);

const Annot = ({ c = W, mark }: { c?: string; mark?: ReactNode }) => (
  <Ic w={24} h={26}>
    <path d="M10 1l4 12 1 5 6 7-8-4-3-2-3 2-7 4 6-7 1-5z" fill={c} />
    {mark}
  </Ic>
);

const StatusCaret = () => <Ic w={12} h={7}><path d="M0 0h12L6 7z" fill={W} /></Ic>;

function StatusBar() {
  return (
    <footer className="flex h-[47px] justify-between pr-[5px] pl-4">
      <nav className="flex">
        <button className="h-9 w-[105px] bg-[#3b4453] pt-1 font-bold text-white [clip-path:polygon(15px_0,100%_0,calc(100%-15px)_100%,0_100%)]">Model</button>
        <div className="flex h-9 items-center pl-[11px]">
          <button className="w-[32px] pt-1 text-left">a3</button>
          <Slash />
          <button aria-label="New layout" className="mx-[14px]"><Plus /></button>
          <Slash />
        </div>
      </nav>
      <div className="flex h-[40px] pt-1">
        <div className="mr-[6px] flex w-[72px] bg-[#3b4453]">
          <button className="w-full font-semibold text-white">MODEL</button>
        </div>
        <div className="mr-[6px] flex bg-[#3b4453]">
          <StatusBtn name="Grid" width="w-9">
            <Ic><path d="M6 0v24M12 0v24M18 0v24M0 6h24M0 12h24M0 18h24" stroke={W} strokeWidth="1.300" /></Ic>
          </StatusBtn>
          <StatusBtn name="Snap" width="w-9">
            <Ic w={18} h={20}><path d="M0 2h18M0 10h18M0 18h18" stroke={W} strokeWidth="3" strokeDasharray="4 3" /></Ic>
          </StatusBtn>
          <StatusBtn name="Snap options" width="w-6"><StatusCaret /></StatusBtn>
        </div>
        <div className="mr-[2px] flex bg-[#3b4453]">
          <StatusBtn name="Dynamic input" width="w-9">
            <Ic><path d="M6 2v13M0 8h12" stroke={W} strokeWidth="1.300" /><path d="M9 14h15v8H9z" stroke={W} /><path d="M12 15h11v6H12z" fill={W} /></Ic>
          </StatusBtn>
        </div>
        <div className="mr-[2px] flex bg-[#3b4453]">
          <StatusBtn name="Ortho" width="w-9">
            <Ic><path d="M1 0v23h23M1 16h7v7" stroke={W} strokeWidth="1.300" /></Ic>
          </StatusBtn>
          <StatusBtn name="Polar tracking" width="w-9">
            <Ic><circle cx="10" cy="13" r="9.500" stroke={W} strokeWidth="1.300" /><path d="M24 13H10L20 2M17 5c3 3 3 5 3 8" stroke={W} strokeWidth="1.300" /></Ic>
          </StatusBtn>
          <StatusBtn name="Polar options" width="w-6"><StatusCaret /></StatusBtn>
          <StatusBtn name="Isodraft" width="w-9">
            <Ic><path d="M13 0v24" stroke="#4fd060" strokeWidth="1.500" /><path d="M3 3l17 19" stroke="#e05a5a" strokeWidth="1.500" /><path d="M11 10h4v4h-4z" stroke={W} fill={P} /></Ic>
          </StatusBtn>
          <StatusBtn name="Isodraft options" width="w-6"><StatusCaret /></StatusBtn>
        </div>
        <div className="mr-[6px] flex bg-[#3b4453]">
          <StatusBtn name="Object snap tracking" width="w-9" on>
            <Ic><path d="M19 3L2 21h22" stroke="#fff" strokeWidth="1.500" /><path d="M8 10h4v4H8z" fill="#fff" /></Ic>
          </StatusBtn>
          <StatusBtn name="Object snap" width="w-9" on>
            <Ic w={26}><path d="M8 4h16v19H4V9" stroke="#fff" strokeWidth="1.300" /><path d="M1 1h6v6H1z" stroke="#fff" strokeWidth="1.500" /></Ic>
          </StatusBtn>
          <StatusBtn name="Object snap options" width="w-6"><StatusCaret /></StatusBtn>
        </div>
        <div className="mr-[6px] flex bg-[#3b4453]">
          <StatusBtn name="Annotation visibility" width="w-9" on>
            <Annot c="#fff" mark={<circle cx="20" cy="6" r="3.500" stroke="#fff" strokeWidth="1.200" />} />
          </StatusBtn>
          <StatusBtn name="Auto scale" width="w-9">
            <Annot mark={<path d="M19 1l-5 6h4l-2 5 7-7h-4l3-4z" fill={W} />} />
          </StatusBtn>
          <StatusBtn name="Annotation scale icon" width="w-9"><Annot /></StatusBtn>
          <button className="flex w-[50px] items-center justify-center gap-1 font-semibold">1:1<StatusCaret /></button>
        </div>
        <div className="mr-[2px] flex bg-[#3b4453]">
          <StatusBtn name="Workspace" width="w-9">
            <Ic>
              <circle cx="12" cy="12" r="6.500" stroke={W} strokeWidth="5" />
              <circle cx="12" cy="12" r="10" stroke={W} strokeWidth="4" strokeDasharray="4 3.850" />
            </Ic>
          </StatusBtn>
          <StatusBtn name="Workspace options" width="w-6"><StatusCaret /></StatusBtn>
        </div>
        <div className="mr-[6px] flex bg-[#3b4453]">
          <StatusBtn name="Annotation monitor" width="w-9">
            <Ic><path d="M12 0v24M0 12h24" stroke={W} strokeWidth="3" /></Ic>
          </StatusBtn>
        </div>
        <div className="mr-1 flex bg-[#3b4453]">
          <StatusBtn name="Isolate objects" width="w-9">
            <Ic><path d="M1 1h8v9H1zM10 15l5 8H5z" stroke={W} strokeWidth="1.300" /><circle cx="18" cy="11" r="5" stroke={W} strokeWidth="1.300" /></Ic>
          </StatusBtn>
        </div>
        <span className="mr-1 w-1 bg-[#3b4453]" />
        <div className="flex bg-[#3b4453]">
          <StatusBtn name="Clean screen" width="w-9">
            <Ic><path d="M1 4h22v16H1z" stroke={W} strokeWidth="1.300" /><path d="M15 6h6v6zM3 18h6l-6-6z" fill={W} /><path d="M14 11l5-4M5 17l5-4" stroke={W} /></Ic>
          </StatusBtn>
          <StatusBtn name="Customization" width="w-9">
            <Ic><path d="M0 3h24M0 12h24M0 21h24" stroke={W} strokeWidth="3" /></Ic>
          </StatusBtn>
        </div>
      </div>
    </footer>
  );
}

export default function App() {
  return (
    <div className="flex min-h-screen flex-col border border-[#0a8fd6] bg-[#222933] font-['Open_Sans','Noto_Sans',sans-serif] text-[17px] leading-6 text-[#ececec]">
      <TitleBar />
      <RibbonTabs />
      <Ribbon />
      <FileTabs />
      <div className="mx-[3px] flex flex-1">
        <Palette />
        <Viewport />
      </div>
      <StatusBar />
    </div>
  );
}
